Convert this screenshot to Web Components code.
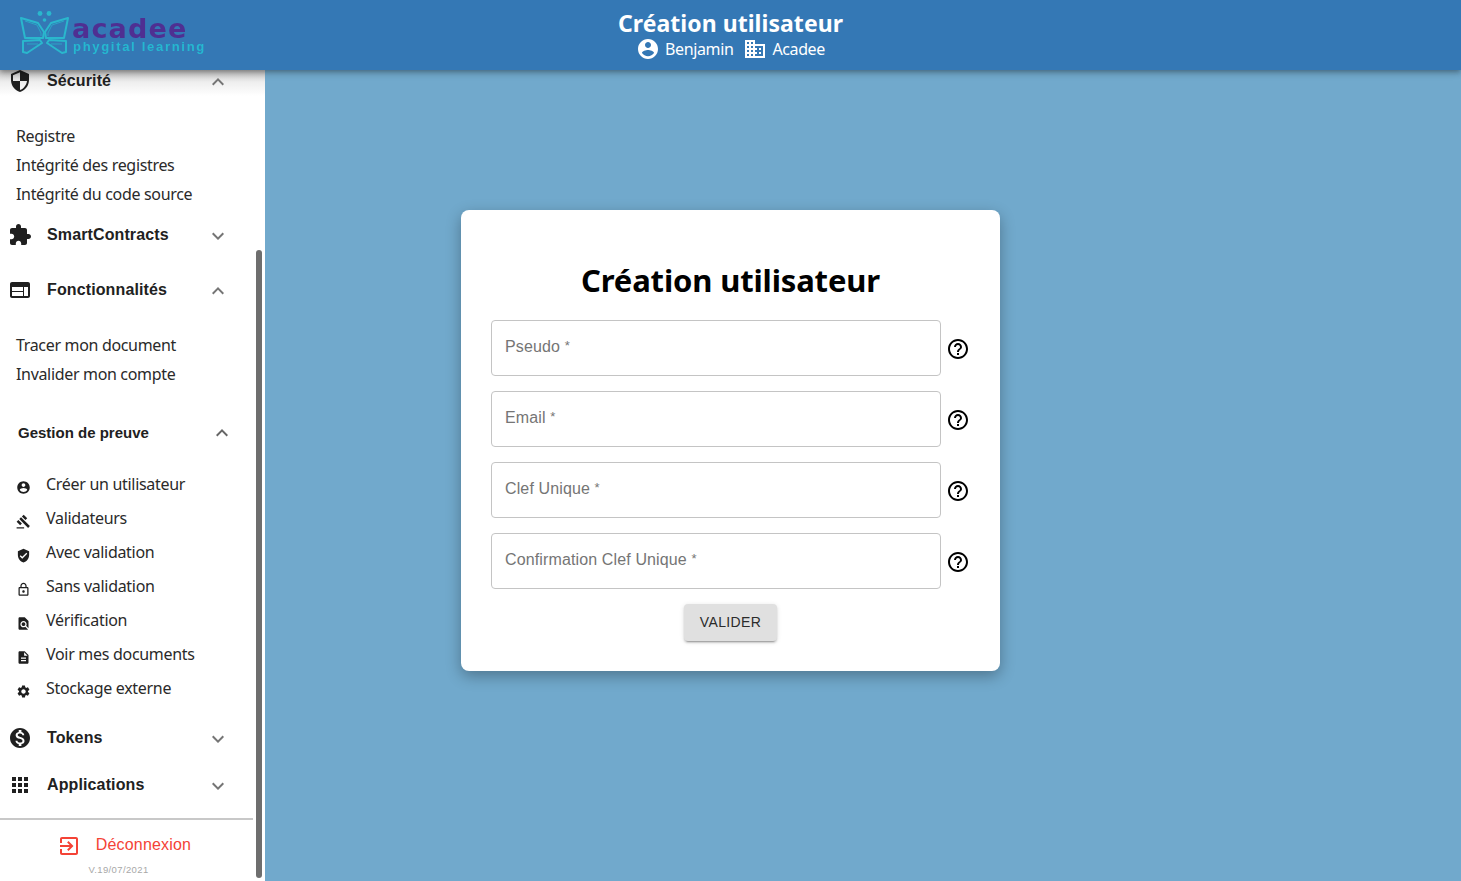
<!DOCTYPE html>
<html lang="fr"><head><meta charset="utf-8"><title>Création utilisateur</title>
<style>
html,body{margin:0;height:100%;overflow:hidden}
body{font-family:"Noto Sans",sans-serif}
</style></head>
<body>
<app-shell>
  <app-header slot="header" title="Création utilisateur" user="Benjamin" org="Acadee"></app-header>
  <side-nav slot="nav">
    <nav-group icon="security" label="Sécurité" open>
      <nav-link>Registre</nav-link>
      <nav-link>Intégrité des registres</nav-link>
      <nav-link>Intégrité du code source</nav-link>
    </nav-group>
    <nav-group icon="extension" label="SmartContracts" gap></nav-group>
    <nav-group icon="web" label="Fonctionnalités" open>
      <nav-link>Tracer mon document</nav-link>
      <nav-link>Invalider mon compte</nav-link>
    </nav-group>
    <nav-section label="Gestion de preuve">
      <nav-item icon="account">Créer un utilisateur</nav-item>
      <nav-item icon="gavel">Validateurs</nav-item>
      <nav-item icon="verified">Avec validation</nav-item>
      <nav-item icon="lock">Sans validation</nav-item>
      <nav-item icon="find">Vérification</nav-item>
      <nav-item icon="description">Voir mes documents</nav-item>
      <nav-item icon="settings">Stockage externe</nav-item>
    </nav-section>
    <nav-group icon="money" label="Tokens"></nav-group>
    <nav-group icon="apps" label="Applications"></nav-group>
    <nav-footer slot="footer"></nav-footer>
  </side-nav>
  <form-card heading="Création utilisateur">
    <text-field label="Pseudo"></text-field>
    <text-field label="Email"></text-field>
    <text-field label="Clef Unique"></text-field>
    <text-field label="Confirmation Clef Unique"></text-field>
  </form-card>
</app-shell>
<script>
const P={
account:'M12 2C6.48 2 2 6.48 2 12s4.48 10 10 10 10-4.48 10-10S17.52 2 12 2zm0 3c1.66 0 3 1.34 3 3s-1.34 3-3 3-3-1.34-3-3 1.34-3 3-3zm0 14.2c-2.5 0-4.71-1.28-6-3.22.03-1.99 4-3.08 6-3.08 1.99 0 5.97 1.09 6 3.08-1.29 1.94-3.5 3.22-6 3.22z',
domain:'M12 7V3H2v18h20V7H12zM6 19H4v-2h2v2zm0-4H4v-2h2v2zm0-4H4V9h2v2zm0-4H4V5h2v2zm4 12H8v-2h2v2zm0-4H8v-2h2v2zm0-4H8V9h2v2zm0-4H8V5h2v2zm10 12h-8v-2h2v-2h-2v-2h2v-2h-2V9h8v10zm-2-8h-2v2h2v-2zm0 4h-2v2h2v-2z',
security:'M12 1L3 5v6c0 5.55 3.84 10.74 9 12 5.16-1.26 9-6.45 9-12V5l-9-4zm0 10.99h7c-.53 4.12-3.28 7.79-7 8.94V12H5V6.3l7-3.11v8.8z',
extension:'M20.5 11H19V7c0-1.1-.9-2-2-2h-4V3.5C13 2.12 11.88 1 10.5 1S8 2.12 8 3.5V5H4c-1.1 0-1.99.9-1.99 2v3.8H3.5c1.49 0 2.7 1.21 2.7 2.7s-1.21 2.7-2.7 2.7H2V20c0 1.1.9 2 2 2h3.8v-1.5c0-1.49 1.21-2.7 2.7-2.7 1.49 0 2.7 1.21 2.7 2.7V22H17c1.1 0 2-.9 2-2v-4h1.5c1.38 0 2.5-1.12 2.5-2.5S21.88 11 20.5 11z',
web:'M20 4H4c-1.1 0-1.99.9-1.99 2L2 18c0 1.1.9 2 2 2h16c1.1 0 2-.9 2-2V6c0-1.1-.9-2-2-2zm-5 14H4v-4h11v4zm0-5H4V9h11v4zm5 5h-4V9h4v9z',
money:'M12 2C6.48 2 2 6.48 2 12s4.48 10 10 10 10-4.48 10-10S17.52 2 12 2zm1.41 16.09V20h-2.67v-1.93c-1.71-.36-3.16-1.46-3.27-3.4h1.96c.1 1.05.82 1.87 2.65 1.87 1.96 0 2.4-.98 2.4-1.59 0-.83-.44-1.61-2.67-2.14-2.48-.6-4.18-1.62-4.18-3.67 0-1.72 1.39-2.84 3.11-3.21V4h2.67v1.95c1.86.45 2.79 1.86 2.85 3.39H14.3c-.05-1.11-.64-1.87-2.22-1.87-1.5 0-2.4.68-2.4 1.64 0 .84.65 1.39 2.67 1.91s4.18 1.39 4.18 3.91c-.01 1.83-1.38 2.83-3.12 3.16z',
apps:'M4 8h4V4H4v4zm6 12h4v-4h-4v4zm-6 0h4v-4H4v4zm0-6h4v-4H4v4zm6 0h4v-4h-4v4zm6-10v4h4V4h-4zm-6 4h4V4h-4v4zm6 6h4v-4h-4v4zm0 6h4v-4h-4v4z',
gavel:'M1 21h12v2H1zM5.245 8.07l2.83-2.827 14.14 14.142-2.828 2.828zM12.317 1l5.657 5.656-2.83 2.83-5.654-5.66zM3.825 9.485l5.657 5.657-2.828 2.828-5.657-5.657z',
verified:'M12 1L3 5v6c0 5.55 3.84 10.74 9 12 5.16-1.26 9-6.45 9-12V5l-9-4zm-2 16l-4-4 1.41-1.41L10 14.17l6.59-6.59L18 9l-8 8z',
lock:'M18 8h-1V6c0-2.76-2.24-5-5-5S7 3.24 7 6v2H6c-1.1 0-2 .9-2 2v10c0 1.1.9 2 2 2h12c1.1 0 2-.9 2-2V10c0-1.1-.9-2-2-2zM9 6c0-1.66 1.34-3 3-3s3 1.34 3 3v2H9V6zm9 14H6V10h12v10zm-6-3c1.1 0 2-.9 2-2s-.9-2-2-2-2 .9-2 2 .9 2 2 2z',
find:'M20 19.59V8l-6-6H6c-1.1 0-1.99.9-1.99 2L4 20c0 1.1.89 2 1.99 2H18c.45 0 .85-.15 1.19-.4l-4.43-4.43c-.8.52-1.74.83-2.76.83-2.76 0-5-2.24-5-5s2.24-5 5-5 5 2.24 5 5c0 1.02-.31 1.96-.83 2.75L20 19.59zM9 13c0 1.66 1.34 3 3 3s3-1.34 3-3-1.34-3-3-3-3 1.34-3 3z',
description:'M14 2H6c-1.1 0-1.99.9-1.99 2L4 20c0 1.1.89 2 1.99 2H18c1.1 0 2-.9 2-2V8l-6-6zm2 16H8v-2h8v2zm0-4H8v-2h8v2zm-3-5V3.5L18.5 9H13z',
settings:'M19.14 12.94c.04-.3.06-.61.06-.94 0-.32-.02-.64-.07-.94l2.03-1.58c.18-.14.23-.41.12-.61l-1.92-3.32c-.12-.22-.37-.29-.59-.22l-2.39.96c-.5-.38-1.03-.7-1.62-.94l-.36-2.54c-.04-.24-.24-.41-.48-.41h-3.84c-.24 0-.43.17-.47.41l-.36 2.54c-.59.24-1.13.57-1.62.94l-2.39-.96c-.22-.08-.47 0-.59.22L2.74 8.87c-.12.21-.08.47.12.61l2.03 1.58c-.05.3-.09.63-.09.94s.02.64.07.94l-2.03 1.58c-.18.14-.23.41-.12.61l1.92 3.32c.12.22.37.29.59.22l2.39-.96c.5.38 1.03.7 1.62.94l.36 2.54c.05.24.24.41.48.41h3.84c.24 0 .44-.17.47-.41l.36-2.54c.59-.24 1.13-.56 1.62-.94l2.39.96c.22.08.47 0 .59-.22l1.92-3.32c.12-.22.07-.47-.12-.61l-2.01-1.58zM12 15.6c-1.98 0-3.6-1.62-3.6-3.6s1.62-3.6 3.6-3.6 3.6 1.62 3.6 3.6-1.62 3.6-3.6 3.6z',
help:'M11 18h2v-2h-2v2zm1-16C6.48 2 2 6.48 2 12s4.48 10 10 10 10-4.48 10-10S17.52 2 12 2zm0 18c-4.41 0-8-3.59-8-8s3.59-8 8-8 8 3.59 8 8-3.59 8-8 8zm0-14c-2.21 0-4 1.79-4 4h2c0-1.1.9-2 2-2s2 .9 2 2c0 2-3 1.75-3 5h2c0-2.25 3-2.5 3-5 0-2.21-1.79-4-4-4z',
less:'M12 8l-6 6 1.41 1.41L12 10.83l4.59 4.58L18 14z',
more:'M16.59 8.59L12 13.17 7.41 8.59 6 10l6 6 6-6z',
exit:'M10.09 15.59L11.5 17l5-5-5-5-1.41 1.41L12.67 11H3v2h9.67l-2.58 2.59zM19 3H5c-1.11 0-2 .9-2 2v4h2V5h14v14H5v-4H3v4c0 1.1.89 2 2 2h14c1.1 0 2-.9 2-2V5c0-1.1-.9-2-2-2z'
};
const UB='"Noto Sans",sans-serif', AR='"Liberation Sans",sans-serif';
function def(tag,html){
  customElements.define(tag,class extends HTMLElement{
    connectedCallback(){
      if(this.shadowRoot)return;
      const s=this.attachShadow({mode:'open'});
      s.innerHTML=typeof html==='function'?html(this):html;
    }
  });
}
def('x-icon',e=>{const z=e.getAttribute('size')||24;return `<style>:host{display:inline-flex;flex:none;width:${z}px;height:${z}px;color:inherit}svg{display:block;width:100%;height:100%;fill:currentColor}</style><svg viewBox="0 0 24 24"><path d="${P[e.getAttribute('name')]}"/></svg>`});

def('app-shell',`<style>
:host{display:grid;grid-template-rows:70px 1fr;grid-template-columns:265px 1fr;width:100%;height:100vh;background:#71a9cc;overflow:hidden}
::slotted([slot=header]){grid-column:1/3;z-index:3}
main{display:flex;align-items:center;justify-content:center;padding:0 265px 70px 0;min-width:0}
</style><slot name="header"></slot><slot name="nav"></slot><main><slot></slot></main>`);

def('app-logo',`<style>
:host{display:flex;align-items:flex-start;gap:2px;filter:blur(.3px)}
svg{display:block;flex:none}
.t{display:flex;flex-direction:column;padding-top:6px}
.a{font:700 27px/25px "DejaVu Sans",sans-serif;color:#4f2f92;letter-spacing:1.2px;height:25px}
.p{font:700 13px/11px "Liberation Sans",sans-serif;color:#25b8d0;letter-spacing:1.7px;white-space:nowrap;margin-left:1px}
</style>
<svg width="51" height="46" viewBox="0 0 51 46" fill="none" stroke="#2ab7cd" stroke-width="2" stroke-linejoin="round">
<circle cx="21" cy="3.500" r="2.400" fill="#2ab7cd" stroke="none"/><circle cx="30" cy="3.500" r="2.400" fill="#2ab7cd" stroke="none"/><circle cx="25.500" cy="10" r="1.800" fill="#2ab7cd" stroke="none"/>
<path d="M2 8l17 5 6 9-1 6H6z"/><path d="M49 8l-17 5-6 9 1 6h18z"/>
<path d="M4 31l17-1 2 3-15 10-4-1zM47 31l-17-1-2 3 15 10 4-1z"/>
<path stroke-width="1" opacity=".7" d="M6 11l12 4 4 8v3M45 11l-12 4-4 8v3M8 34h11M43 34H32"/>
</svg>
<div class="t"><div class="a">acadee</div><div class="p">phygital learning</div></div>`);

def('app-header',e=>`<style>
:host{display:flex;position:relative;align-items:center;justify-content:center;box-sizing:border-box;height:70px;padding-top:1px;background:#3478b5;color:#fff;box-shadow:0 2px 4px -1px rgba(0,0,0,.2),0 4px 5px rgba(0,0,0,.14),0 1px 10px rgba(0,0,0,.12)}
app-logo{position:absolute;left:19px;top:10px}
.c{display:flex;flex-direction:column;align-items:center}
h1{margin:0;font:700 23px/27px ${UB};letter-spacing:.05px}
.m{display:flex;align-items:center;height:24px;font:400 16px/24px ${UB};letter-spacing:-.38px;gap:10px}
.i{display:flex;align-items:center;gap:5px}
</style>
<app-logo></app-logo>
<div class="c"><h1>${e.getAttribute('title')}</h1>
<div class="m"><span class="i"><x-icon name="account"></x-icon>${e.getAttribute('user')}</span><span class="i"><x-icon name="domain"></x-icon>${e.getAttribute('org')}</span></div></div>`);

def('side-nav',`<style>
:host{display:flex;flex-direction:column;position:relative;width:265px;overflow:hidden;background:linear-gradient(#c4c4c4,#eee 12px,#fff 26px);z-index:2}
.l{display:flex;flex-direction:column;margin-top:-13px}
.th{position:absolute;left:256px;top:180px;width:6px;height:628px;border-radius:3px;background:#6e6e6e}
</style><div class="l"><slot></slot></div><slot name="footer"></slot><div class="th"></div>`);

def('nav-group',e=>{const o=e.hasAttribute('open');return `<style>
:host{display:block}
:host([gap]){margin-bottom:8px}
.r{display:flex;align-items:center;height:47px;padding:0 35px 0 8px}
.t{font:700 16px/24px ${AR};letter-spacing:.12px;margin-left:15px;flex:1;color:#212121}
.g{color:#202020}
.c{color:#757575;margin-top:2px}
.l{display:flex;flex-direction:column;padding:18px 0 2px 16px}
</style><div class="r"><x-icon class="g" name="${e.getAttribute('icon')}"></x-icon><span class="t">${e.getAttribute('label')}</span><x-icon class="c" name="${o?'less':'more'}"></x-icon></div>${o?'<div class="l"><slot></slot></div>':''}`});

def('nav-link',`<style>:host{display:block;height:29px;font:400 16px/29px ${UB};letter-spacing:-.33px;color:#2a2a2a;white-space:nowrap}</style><slot></slot>`);

def('nav-section',e=>`<style>
:host{display:block;margin-top:18px;margin-bottom:9px}
.r{display:flex;align-items:center;justify-content:space-between;height:48px;padding:0 31px 0 18px;font:700 15px/24px ${AR};color:#212121}
.r x-icon{color:#666}
.l{display:flex;flex-direction:column;margin-top:10px}
</style><div class="r"><span>${e.getAttribute('label')}</span><x-icon name="less"></x-icon></div><div class="l"><slot></slot></div>`);

def('nav-item',e=>`<style>
:host{display:flex;align-items:center;height:34px;padding-left:16px;font:400 16px/24px ${UB};letter-spacing:-.3px;color:#2a2a2a;white-space:nowrap}
x-icon{color:#1f1f1f;margin-top:6px}
span{margin-left:15px}
</style><x-icon size="15" name="${e.getAttribute('icon')}"></x-icon><span><slot></slot></span>`);

def('nav-footer',`<style>
:host{display:block;margin-top:10px;width:253px}
.d{height:2px;background:#c8c8c8}
.o{display:flex;align-items:center;justify-content:center;gap:15px;height:49px;padding-right:5px;color:#f44336;font:400 16px/24px ${AR};letter-spacing:.18px}
.o x-icon{margin-top:3px}
.v{text-align:center;padding-right:16px;font:400 9.500px/12px ${AR};letter-spacing:.38px;color:#a8a8a8;margin-top:-5px;white-space:nowrap}
</style><div class="d"></div><div class="o"><x-icon name="exit"></x-icon>Déconnexion</div><div class="v">V.19/07/2021</div>`);

def('form-card',e=>`<style>
:host{display:block;box-sizing:border-box;width:539px;height:461px;padding:49px 30px 0;background:#fff;border-radius:8px;box-shadow:0 5px 15px rgba(0,0,0,.3)}
h2{margin:0 0 19px;text-align:center;font:700 31px/42px ${UB};letter-spacing:-.15px;color:#000}
.f{display:flex;flex-direction:column;gap:15px}
.b{display:flex;justify-content:center;margin-top:15px}
button{all:unset;box-sizing:border-box;width:93px;height:37px;padding-bottom:2px;text-align:center;background:#e0e0e0;color:#2b2b2b;font:400 14px/20px ${AR};letter-spacing:.35px;border-radius:4px;box-shadow:0 3px 1px -2px rgba(0,0,0,.2),0 2px 2px rgba(0,0,0,.14),0 1px 5px rgba(0,0,0,.12)}
</style><h2>${e.getAttribute('heading')}</h2><div class="f"><slot></slot></div><div class="b"><button>VALIDER</button></div>`);

def('text-field',e=>`<style>
:host{display:flex;align-items:flex-start}
.i{box-sizing:border-box;width:450px;height:56px;border:1px solid #c4c4c4;border-radius:4px;padding:0 13px;font:400 16px/52px ${AR};letter-spacing:.13px;color:#757575;white-space:nowrap}
sup{font-size:13px;line-height:0;vertical-align:baseline;position:relative;top:-2px}
x-icon{color:#000;margin:17px 0 0 5px}
</style><div class="i">${e.getAttribute('label')} <sup>*</sup></div><x-icon name="help"></x-icon>`);
</script>
</body></html>
